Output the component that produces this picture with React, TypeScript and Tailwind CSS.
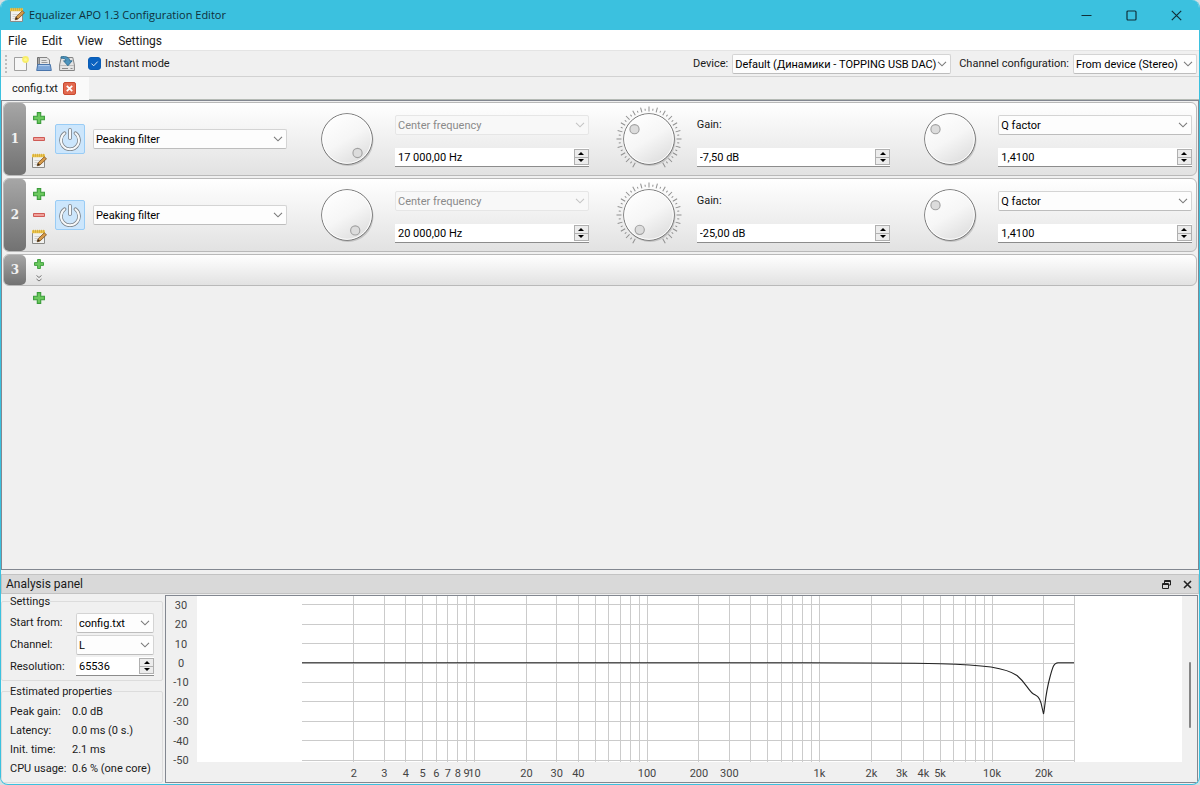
import React from "react";

const NUMBER_GRADIENT =
  "flex w-[22px] shrink-0 items-center justify-center rounded-[5px] bg-linear-to-b from-[#a6a6a6] to-[#727272] font-[DejaVu_Serif,serif] text-xs font-bold text-[#f2f2f2]";

const Chevron = ({ muted = false }: { muted?: boolean }) => (
  <svg
    viewBox="0 0 10 6"
    className={
      muted
        ? "pointer-events-none absolute top-1/2 right-1 h-[6px] w-[10px] -translate-y-1/2 text-[#c4c4c4]"
        : "pointer-events-none absolute top-1/2 right-1 h-[6px] w-[10px] -translate-y-1/2 text-[#7a7a7a]"
    }
  >
    <path d="M1 .8 5 4.8 9 .8" fill="none" stroke="currentColor" strokeWidth="1.1" />
  </svg>
);

type ComboProps = {
  id?: string;
  label?: string;
  value: string;
  disabled?: boolean;
};

const Combo = ({ id, label, value, disabled }: ComboProps) => (
  <div className="relative w-full">
    <select
      id={id}
      aria-label={label}
      disabled={disabled}
      defaultValue={value}
      className="block h-5 w-full appearance-none rounded-[2px] border border-[#d4d4d4] border-b-[#bdbdbd] bg-[#fdfdfd] pt-[2px] pr-3 pl-[2px] text-black disabled:border-[#e6e6e6] disabled:bg-[#f8f8f8] disabled:text-[#8a8a8a] disabled:opacity-100"
    >
      <option>{value}</option>
    </select>
    <Chevron muted={disabled} />
  </div>
);

const SpinBox = ({ id, label, value }: ComboProps) => (
  <div className="flex h-[19px] w-full border-b border-[#8c8c8c] bg-white">
    <input
      id={id}
      aria-label={label}
      defaultValue={value}
      className="min-w-0 flex-1 bg-transparent pt-[2px] pl-[3px] text-black outline-none"
    />
    <div className="mt-px flex h-4 w-[15px] flex-col border border-[#b0b0b0] bg-[#ececec]">
      <button
        aria-label="Increase"
        className="flex flex-1 items-center justify-center border-b border-[#b0b0b0]"
      >
        <svg viewBox="0 0 6 3" className="h-[3px] w-[6px]">
          <path d="M0 3 3 0 6 3z" />
        </svg>
      </button>
      <button aria-label="Decrease" className="flex flex-1 items-center justify-center">
        <svg viewBox="0 0 6 3" className="h-[3px] w-[6px]">
          <path d="M0 0 3 3 6 0z" />
        </svg>
      </button>
    </div>
  </div>
);

const NotepadIcon = () => (
  <svg viewBox="0 0 16 16" className="size-4">
    <path d="M1.500 2.500h12v12h-12z" fill="#f1f1ef" stroke="#8b8b88" />
    <path d="M3.500 7.500h7M3.500 9.500h6M3.500 11.500h5" stroke="#d2d2cf" />
    <path d="M1 1.200h13v3H1z" fill="#ecc64c" />
    <path d="M2.500.8v3M4.500.8v3M6.500.8v3M8.500.8v3M10.500.8v3M12.500.8v3" stroke="#d3a836" strokeWidth=".8" />
    <path d="m6.200 12.800.8-2.900 6.300-6.100 2.200 2-6.400 6.100z" fill="#d59a4a" stroke="#7d5220" strokeWidth=".8" />
    <path d="m6.200 12.800.8-2.900 2.100 2z" fill="#3a2a18" />
  </svg>
);

const PlusIcon = ({ small = false }: { small?: boolean }) => (
  <svg viewBox="0 0 12 12" className={small ? "size-[10px]" : "size-3"}>
    <path
      d="M4.300.6h3.400v3.700h3.700v3.400H7.700v3.700H4.300V7.700H.6V4.300h3.700z"
      fill="#6cc95e"
      stroke="#3a9c3a"
      strokeWidth="1.100"
    />
  </svg>
);

const MinusIcon = () => (
  <svg viewBox="0 0 12 4" className="h-1 w-3">
    <path d="M.5.5h11v3H.5z" fill="#f0a09a" stroke="#cf5a55" />
  </svg>
);

const PowerIcon = () => (
  <svg viewBox="0 0 24 24" className="size-6" fill="none" strokeLinecap="round">
    <g stroke="#7b8187" strokeWidth="3.600">
      <path d="M6.500 6.200a9 9 0 1 0 11 0" />
      <path d="M12 2.800v8.500" />
    </g>
    <g stroke="#f7f9fa" strokeWidth="2">
      <path d="M6.500 6.200a9 9 0 1 0 11 0" />
      <path d="M12 2.800v8.500" />
    </g>
  </svg>
);

const NewIcon = () => (
  <svg viewBox="0 0 16 16" className="size-4">
    <path d="M1.500 1.500h12v13h-12z" fill="#f7f7f7" stroke="#a0a0a0" />
    <circle cx="12.500" cy="3.500" r="3.400" fill="#f8ee6a" />
    <circle cx="12.500" cy="3.500" r="1.600" fill="#fff78f" />
  </svg>
);

const OpenIcon = () => (
  <svg viewBox="0 0 16 16" className="size-4">
    <path d="M1.500 13V1.500h2.500L5 3v10z" fill="#a9a9a9" stroke="#6f6f6f" />
    <path d="M3.500 10V1.500h7.500l2.500 2.500V10z" fill="#e6e6e6" stroke="#858585" />
    <path d="M5.500 4.500h5M5.500 6.500h6" stroke="#9a9a9a" />
    <path d="M.7 14.500 1.700 8.500h12.600l1 6z" fill="#7da6d8" stroke="#4a75ab" />
    <path d="M2.500 9.600h11" stroke="#b5d0ee" />
  </svg>
);

const SaveIcon = () => (
  <svg viewBox="0 0 16 16" className="size-4">
    <path d="M.6 14.500V9l1.600-7.500h11.600L15.400 9v5.500z" fill="#e4e4e4" stroke="#858585" />
    <path d="M1 9.500h14" stroke="#bdbdbd" />
    <path d="M3 12.500h6M11.500 12.500h2" stroke="#8a8a8a" />
    <path
      d="M2 .8c5-1 8.500.6 8.800 4h2.400L8.900 9.800 4.500 4.800h2.500C6.800 3 5 2 2 2.200z"
      fill="#4d94bd"
      stroke="#246388"
      strokeWidth=".8"
    />
  </svg>
);

// -150deg .. 150deg, every second tick is a long one
const TICKS = Array.from({ length: 41 }, (_, i) => ({
  angle: -150 + i * 7.5,
  long: i % 2 === 0,
}));

const Dial = ({ angle, ticks = false }: { angle: number; ticks?: boolean }) => {
  const rad = (angle * Math.PI) / 180;
  return (
    <svg viewBox="-34 -34 68 68" className="-mx-[2px] size-[68px] shrink-0">
      <defs>
        <linearGradient id="knob" x1="0.2" y1="0" x2="0.8" y2="1">
          <stop offset="0" stopColor="#ffffff" />
          <stop offset="0.5" stopColor="#f6f6f6" />
          <stop offset="1" stopColor="#dcdcdc" />
        </linearGradient>
      </defs>
      {ticks &&
        TICKS.map((tick) => (
          <path
            key={tick.angle}
            d={tick.long ? "M0-27.500V-32.500" : "M0-28.500V-30.500"}
            transform={`rotate(${tick.angle})`}
            stroke="#8f8f8f"
            strokeWidth="1"
          />
        ))}
      <circle cx="1" cy="1.500" r="25.500" fill="#00000026" />
      <circle r="25.300" fill="url(#knob)" stroke="#6e6e6e" strokeWidth="1" />
      <circle r="24.300" fill="none" stroke="#ffffff" strokeWidth="1" />
      <circle
        cx={Math.sin(rad) * 17.5}
        cy={-Math.cos(rad) * 17.5}
        r="4.600"
        fill="#dcdcdc"
        stroke="#a0a0a0"
        strokeWidth="1.100"
      />
    </svg>
  );
};

type Filter = {
  id: number;
  freq: string;
  freqAngle: number;
  gain: string;
  gainAngle: number;
  q: string;
  qAngle: number;
};

const filters: Filter[] = [
  { id: 1, freq: "17 000,00 Hz", freqAngle: 143, gain: "-7,50 dB", gainAngle: -56, q: "1,4100", qAngle: -56 },
  { id: 2, freq: "20 000,00 Hz", freqAngle: 152, gain: "-25,00 dB", gainAngle: -148, q: "1,4100", qAngle: -56 },
];

const FilterRow = ({ filter }: { filter: Filter }) => (
  <li className="flex h-[74px] rounded-md border border-[#b9b9b9] bg-linear-to-b from-white to-[#e2e2e2]">
    <div className={NUMBER_GRADIENT}>{filter.id}</div>
    <div className="mr-[3px] flex w-[26px] flex-col items-center justify-between pt-[9px] pb-[6px]">
      <button aria-label="Add filter">
        <PlusIcon />
      </button>
      <button aria-label="Remove filter">
        <MinusIcon />
      </button>
      <button aria-label="Edit filter">
        <NotepadIcon />
      </button>
    </div>
    <div className="flex items-center gap-2">
      <button
        aria-label="Toggle filter"
        className="flex size-[30px] items-center justify-center rounded-[2px] border border-[#99ccf5] bg-[#cce6fc]"
      >
        <PowerIcon />
      </button>
      <div className="w-[194px]">
        <Combo label="Filter type" value="Peaking filter" />
      </div>
    </div>
    <div className="grid flex-1 grid-cols-3 pr-1">
      <div className="flex items-center gap-4 pl-7">
        <Dial angle={filter.freqAngle} />
        <div className="flex flex-1 flex-col gap-[13px] pt-1">
          <Combo label="Frequency type" value="Center frequency" disabled />
          <SpinBox label="Frequency" value={filter.freq} />
        </div>
      </div>
      <div className="flex items-center gap-4 pl-7">
        <Dial angle={filter.gainAngle} ticks />
        <div className="flex flex-1 flex-col gap-[13px] pt-1">
          <label htmlFor={`gain-${filter.id}`} className="h-5 leading-5">
            Gain:
          </label>
          <SpinBox id={`gain-${filter.id}`} value={filter.gain} />
        </div>
      </div>
      <div className="flex items-center gap-4 pl-7">
        <Dial angle={filter.qAngle} />
        <div className="flex flex-1 flex-col gap-[13px] pt-1">
          <Combo label="Width type" value="Q factor" />
          <SpinBox label="Q factor" value={filter.q} />
        </div>
      </div>
    </div>
  </li>
);

const TitleBar = () => (
  <header className="flex h-[30px] items-center bg-[#3bc1df] pl-2">
    <NotepadIcon />
    <h1 className="ml-1 flex-1 font-[Open_Sans,sans-serif] text-[11px] text-[#10303a]">
      Equalizer APO 1.3 Configuration Editor
    </h1>
    <button aria-label="Minimize" className="flex h-full w-[45px] items-center justify-center">
      <svg viewBox="0 0 11 11" className="size-[11px]">
        <path d="M.5 5.500h10" stroke="#10303a" />
      </svg>
    </button>
    <button aria-label="Maximize" className="flex h-full w-[45px] items-center justify-center">
      <svg viewBox="0 0 11 11" className="size-[11px]">
        <rect x="1" y="1" width="9" height="9" rx="1" fill="none" stroke="#10303a" strokeWidth="1.200" />
      </svg>
    </button>
    <button aria-label="Close" className="flex h-full w-[45px] items-center justify-center">
      <svg viewBox="0 0 11 11" className="size-[11px]">
        <path d="m.8.8 9.400 9.400M10.200.8.8 10.200" stroke="#10303a" strokeWidth="1.200" />
      </svg>
    </button>
  </header>
);

const Toolbar = () => (
  <div className="flex h-[26px] items-center border-b border-[#d2d2d2] pr-[2px] pl-1">
    <div className="mr-[6px] h-[18px] border-l-2 border-dotted border-[#bdbdbd]" />
    <button aria-label="New" className="mr-[7px]">
      <NewIcon />
    </button>
    <button aria-label="Open" className="mr-[7px]">
      <OpenIcon />
    </button>
    <button aria-label="Save">
      <SaveIcon />
    </button>
    <label className="ml-[13px] flex items-center gap-1">
      <span className="relative flex">
        <input
          type="checkbox"
          defaultChecked
          className="size-[13px] appearance-none rounded-[3px] border border-[#0a5cb5] checked:bg-[#0a62c0]"
        />
        <svg viewBox="0 0 13 13" className="pointer-events-none absolute inset-0 size-[13px]">
          <path d="m3.500 6.600 2.200 2.200 4-4.200" fill="none" stroke="#dbe9f8" />
        </svg>
      </span>
      Instant mode
    </label>
    <label htmlFor="device" className="mr-1 ml-auto">
      Device:
    </label>
    <div className="w-[219px]">
      <Combo id="device" value="Default (Динамики - TOPPING USB DAC)" />
    </div>
    <label htmlFor="channels" className="mr-1 ml-2">
      Channel configuration:
    </label>
    <div className="w-[124px]">
      <Combo id="channels" value="From device (Stereo)" />
    </div>
  </div>
);

const GRID_LEFT = 136;
const DECADE = 172.5;
const ZERO_DB = 67;

const freqX = (hz: number) => GRID_LEFT + DECADE * Math.log10(hz);
const gainY = (db: number) => ZERO_DB - db * 1.94;

const gridFreqs = [1, 10, 100, 1000, 10000]
  .flatMap((base) => Array.from({ length: 9 }, (_, i) => base * (i + 1)))
  .filter((hz) => hz > 1 && hz <= 30000);
const gridGains = [30, 20, 10, 0, -10, -20, -30, -40, -50];
const freqLabels: [number, string][] = [
  [2, "2"],
  [3, "3"],
  [4, "4"],
  [5, "5"],
  [6, "6"],
  [7, "7"],
  [8, "8"],
  [9, "9"],
  [10, "10"],
  [20, "20"],
  [30, "30"],
  [40, "40"],
  [100, "100"],
  [200, "200"],
  [300, "300"],
  [1000, "1k"],
  [2000, "2k"],
  [3000, "3k"],
  [4000, "4k"],
  [5000, "5k"],
  [10000, "10k"],
  [20000, "20k"],
];

const ResponseChart = () => (
  <svg className="h-full min-w-0 flex-1 text-[11px]" role="img" aria-label="Frequency response">
    <rect x="31" y="0" width="100%" height="166" fill="#fff" />
    <g stroke="#cbcbcb" strokeWidth="1" shapeRendering="crispEdges">
      {gridFreqs.map((hz) => (
        <line key={hz} x1={freqX(hz)} x2={freqX(hz)} y1="0" y2="166" />
      ))}
      {gridGains.map((db) => (
        <line key={db} x1={GRID_LEFT} x2={freqX(30000)} y1={gainY(db)} y2={gainY(db)} />
      ))}
    </g>
    <g fill="#444" textAnchor="middle">
      {gridGains.map((db) => (
        <text key={db} x="15" y={gainY(db) + 4}>
          {db}
        </text>
      ))}
      {freqLabels.map(([hz, text]) => (
        <text key={hz} x={freqX(hz)} y="181">
          {text}
        </text>
      ))}
    </g>
    <path
      d="M136 66.800H640C700 66.800 740 67 774 67.700C795 68.300 812 69.300 825 71C840 73.500 846 76 851 79.500C860 87 862 94 867.500 98C871 100 873 100.500 875 107L877.500 118C879 112 879 99 884 81C887 70 888 67 892 66.800H908"
      fill="none"
      stroke="#222"
      strokeWidth="1.100"
    />
  </svg>
);

const stats = [
  ["Peak gain:", "0.0 dB"],
  ["Latency:", "0.0 ms (0 s.)"],
  ["Init. time:", "2.1 ms"],
  ["CPU usage:", "0.6 % (one core)"],
];

const AnalysisPanel = () => (
  <section className="mt-1 mb-px">
    <div className="flex h-5 items-center border border-[#c3c3c3] bg-[#d9d9d9] pr-[6px] pl-1">
      <h2 className="flex-1 text-xs">Analysis panel</h2>
      <button aria-label="Float panel" className="mr-3">
        <svg viewBox="0 0 9 9" className="size-[9px]" fill="none" stroke="#222">
          <path d="M2.500 3V.5h6v4.500H6.500M2.500 1.500h6M.5 3.500h6v5h-6zM.5 4.500h6" />
        </svg>
      </button>
      <button aria-label="Close panel">
        <svg viewBox="0 0 9 9" className="size-[9px]">
          <path d="m1 1 7 7M8 1 1 8" stroke="#222" strokeWidth="1.600" />
        </svg>
      </button>
    </div>
    <div className="mt-px flex h-[188px] gap-[2px] pr-px">
      <div className="flex w-[162px] shrink-0 flex-col gap-1">
        <fieldset className="min-w-0 rounded-[2px] border border-[#dcdcdc] pr-2 pb-1 pl-2">
          <legend className="px-0 leading-[13px]">Settings</legend>
          <div className="mt-[5px] grid grid-cols-[66px_minmax(0,1fr)] items-center gap-y-[2px]">
            <label htmlFor="start">Start from:</label>
            <Combo id="start" value="config.txt" />
            <label htmlFor="channel">Channel:</label>
            <Combo id="channel" value="L" />
            <label htmlFor="resolution">Resolution:</label>
            <SpinBox id="resolution" value="65536" />
          </div>
        </fieldset>
        <fieldset className="min-w-0 flex-1 rounded-[2px] border border-[#dcdcdc] pl-2">
          <legend className="leading-[13px]">Estimated properties</legend>
          <dl className="mt-1 grid grid-cols-[62px_1fr] leading-[19px] whitespace-nowrap">
            {stats.map(([name, value]) => (
              <React.Fragment key={name}>
                <dt>{name}</dt>
                <dd>{value}</dd>
              </React.Fragment>
            ))}
          </dl>
        </fieldset>
      </div>
      <div className="flex min-w-0 flex-1 border border-[#828790]">
        <ResponseChart />
        <div className="flex w-[15px] justify-center">
          <div className="mt-[66px] h-[66px] w-[2px] rounded-full bg-[#868686]" />
        </div>
      </div>
    </div>
  </section>
);

export default function App() {
  return (
    <div className="min-h-screen bg-[#d5dfe2] font-[Roboto,sans-serif] text-[11px] leading-4 text-[#1a1a1a]">
      <div className="flex min-h-screen flex-col overflow-hidden rounded-lg border border-t-0 border-[#3bc1df] bg-[#f0f0f0]">
        <TitleBar />
        <nav className="flex h-[21px] items-center gap-[15px] border-b border-[#e4e4e4] bg-white pt-[2px] pl-[7px] text-xs">
          <button>File</button>
          <button>Edit</button>
          <button>View</button>
          <button>Settings</button>
        </nav>
        <Toolbar />
        <div className="flex h-[23px] shrink-0">
          <div className="flex w-[88px] items-center gap-[5px] bg-[#fafafa] pl-[11px]">
            config.txt
            <button
              aria-label="Close tab"
              className="flex size-[13px] items-center justify-center rounded-[2px] border border-[#c94a30] bg-[#e2694f]"
            >
              <svg viewBox="0 0 7 7" className="size-[7px]">
                <path d="m.8.8 5.400 5.400M6.200.8.8 6.200" stroke="#fff" strokeWidth="1.800" />
              </svg>
            </button>
          </div>
          <div className="flex-1 border-b border-[#b5bab5]" />
        </div>
        <main className="flex-1 border border-[#828790] p-px">
          <ol className="flex flex-col gap-[2px]">
            {filters.map((filter) => (
              <FilterRow key={filter.id} filter={filter} />
            ))}
            <li className="flex h-8 rounded-md border border-[#b9b9b9] bg-linear-to-b from-white to-[#e2e2e2]">
              <div className={NUMBER_GRADIENT}>3</div>
              <div className="flex w-[26px] flex-col items-center gap-[6px] pt-1">
                <button aria-label="Add filter">
                  <PlusIcon small />
                </button>
                <svg viewBox="0 0 6 7" className="h-[7px] w-[6px]" fill="none" stroke="#777">
                  <path d="m.5.5 2.500 2 2.500-2M.5 4l2.500 2 2.500-2" />
                </svg>
              </div>
            </li>
          </ol>
          <button aria-label="Append filter" className="mt-[6px] ml-[30px] block">
            <PlusIcon />
          </button>
        </main>
        <AnalysisPanel />
      </div>
    </div>
  );
}
